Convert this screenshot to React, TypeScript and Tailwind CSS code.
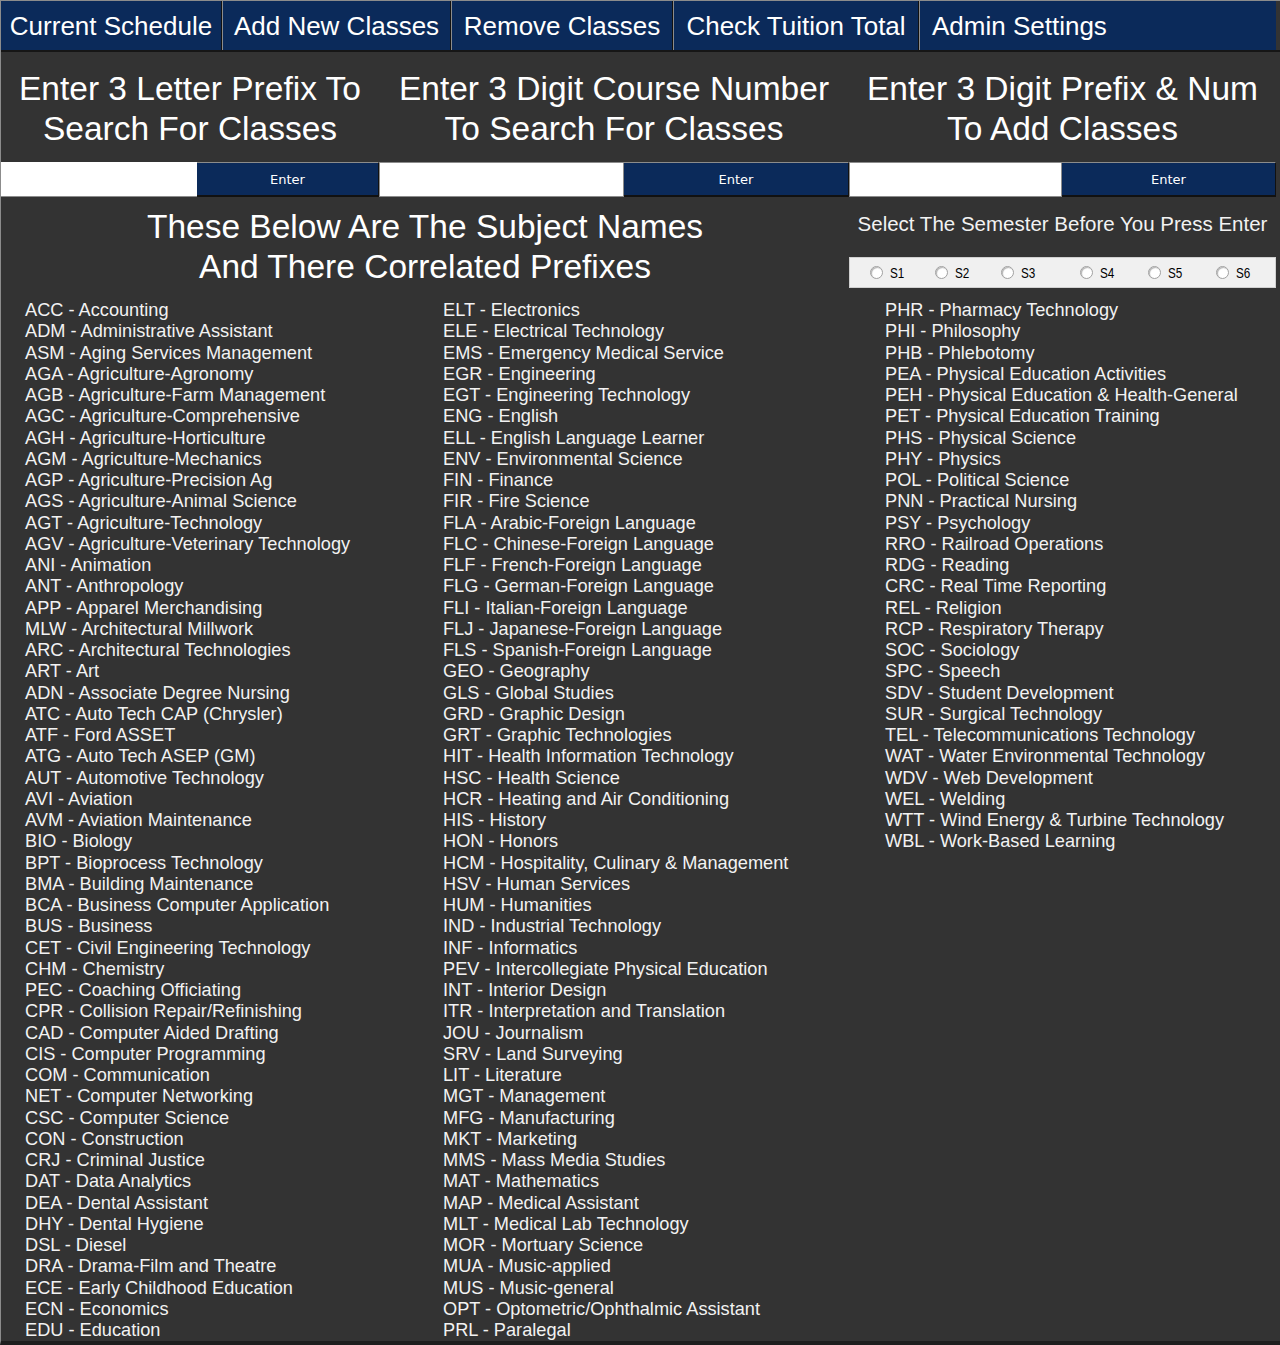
import React from 'react';

const colOne = [
  'ACC - Accounting', 'ADM - Administrative Assistant', 'ASM - Aging Services Management', 'AGA - Agriculture-Agronomy',
  'AGB - Agriculture-Farm Management', 'AGC - Agriculture-Comprehensive', 'AGH - Agriculture-Horticulture', 'AGM - Agriculture-Mechanics',
  'AGP - Agriculture-Precision Ag', 'AGS - Agriculture-Animal Science', 'AGT - Agriculture-Technology', 'AGV - Agriculture-Veterinary Technology',
  'ANI - Animation', 'ANT - Anthropology', 'APP - Apparel Merchandising', 'MLW - Architectural Millwork', 'ARC - Architectural Technologies',
  'ART - Art', 'ADN - Associate Degree Nursing', 'ATC - Auto Tech CAP (Chrysler)', 'ATF - Ford ASSET', 'ATG - Auto Tech ASEP (GM)',
  'AUT - Automotive Technology', 'AVI - Aviation', 'AVM - Aviation Maintenance', 'BIO - Biology', 'BPT - Bioprocess Technology',
  'BMA - Building Maintenance', 'BCA - Business Computer Application', 'BUS - Business', 'CET - Civil Engineering Technology',
  'CHM - Chemistry', 'PEC - Coaching Officiating', 'CPR - Collision Repair/Refinishing', 'CAD - Computer Aided Drafting',
  'CIS - Computer Programming', 'COM - Communication', 'NET - Computer Networking', 'CSC - Computer Science', 'CON - Construction',
  'CRJ - Criminal Justice', 'DAT - Data Analytics', 'DEA - Dental Assistant', 'DHY - Dental Hygiene', 'DSL - Diesel',
  'DRA - Drama-Film and Theatre', 'ECE - Early Childhood Education', 'ECN - Economics', 'EDU - Education',
];

const colTwo = [
  'ELT - Electronics', 'ELE - Electrical Technology', 'EMS - Emergency Medical Service', 'EGR - Engineering', 'EGT - Engineering Technology',
  'ENG - English', 'ELL - English Language Learner', 'ENV - Environmental Science', 'FIN - Finance', 'FIR - Fire Science',
  'FLA - Arabic-Foreign Language', 'FLC - Chinese-Foreign Language', 'FLF - French-Foreign Language', 'FLG - German-Foreign Language',
  'FLI - Italian-Foreign Language', 'FLJ - Japanese-Foreign Language', 'FLS - Spanish-Foreign Language', 'GEO - Geography',
  'GLS - Global Studies', 'GRD - Graphic Design', 'GRT - Graphic Technologies', 'HIT - Health Information Technology',
  'HSC - Health Science', 'HCR - Heating and Air Conditioning', 'HIS - History', 'HON - Honors', 'HCM - Hospitality, Culinary & Management',
  'HSV - Human Services', 'HUM - Humanities', 'IND - Industrial Technology', 'INF - Informatics', 'PEV - Intercollegiate Physical Education',
  'INT - Interior Design', 'ITR - Interpretation and Translation', 'JOU - Journalism', 'SRV - Land Surveying', 'LIT - Literature',
  'MGT - Management', 'MFG - Manufacturing', 'MKT - Marketing', 'MMS - Mass Media Studies', 'MAT - Mathematics', 'MAP - Medical Assistant',
  'MLT - Medical Lab Technology', 'MOR - Mortuary Science', 'MUA - Music-applied', 'MUS - Music-general',
  'OPT - Optometric/Ophthalmic Assistant', 'PRL - Paralegal',
];

const colThree = [
  'PHR - Pharmacy Technology', 'PHI - Philosophy', 'PHB - Phlebotomy', 'PEA - Physical Education Activities',
  'PEH - Physical Education & Health-General', 'PET - Physical Education Training', 'PHS - Physical Science', 'PHY - Physics',
  'POL - Political Science', 'PNN - Practical Nursing', 'PSY - Psychology', 'RRO - Railroad Operations', 'RDG - Reading',
  'CRC - Real Time Reporting', 'REL - Religion', 'RCP - Respiratory Therapy', 'SOC - Sociology', 'SPC - Speech',
  'SDV - Student Development', 'SUR - Surgical Technology', 'TEL - Telecommunications Technology', 'WAT - Water Environmental Technology',
  'WDV - Web Development', 'WEL - Welding', 'WTT - Wind Energy & Turbine Technology', 'WBL - Work-Based Learning',
];

const tabs = [
  { label: 'Current Schedule', w: 'w-[221px]' },
  { label: 'Add New Classes', w: 'w-[229px]' },
  { label: 'Remove Classes', w: 'w-[222px]' },
  { label: 'Check Tuition Total', w: 'w-[246px]' },
];

// each radio slot has its own width so the circles land where the form put them
const semesters = [
  { label: 'S1', w: 'w-[65px]' },
  { label: 'S2', w: 'w-[66px]' },
  { label: 'S3', w: 'w-[79px]' },
  { label: 'S4', w: 'w-[68px]' },
  { label: 'S5', w: 'w-[68px]' },
  { label: 'S6', w: 'w-[50px]' },
];

const SubjectList = ({ items, className }: { items: string[]; className?: string }) => (
  <ul className={`text-[18.2px] leading-[21.25px] text-[#f2f2f2] whitespace-nowrap ${className ?? ''}`}>
    {items.map((s) => (
      <li key={s}>{s}</li>
    ))}
  </ul>
);

const EnterButton = ({ width }: { width: string }) => (
  <button
    className={`${width} h-full bg-[#0b2a5a] text-white text-[13px] font-['DejaVu_Sans'] pt-[2px] border-t border-t-[#8c8c8c] border-r border-r-[#111] border-b-2 border-b-[#111]`}
  >
    Enter
  </button>
);

export default function App() {
  return (
    <div className="w-[1280px] h-[1345px] bg-[#333333] font-['Liberation_Sans',Arial,sans-serif] text-white overflow-hidden border-l border-l-[#8c8c8c] border-b-4 border-b-[#1e1e1e]">
      {/* tab bar */}
      <nav className="flex h-[52px] bg-[#0b2a5a] border-t border-t-[#8c8c8c] border-b-2 border-b-[#161616]">
        {tabs.map((t) => (
          <div
            key={t.label}
            className={`${t.w} flex items-center justify-center text-[26px] leading-none whitespace-nowrap border-l border-l-[#8c8c8c] border-r border-r-[#111] first:border-l-0`}
          >
            {t.label}
          </div>
        ))}
        <div className="flex-1 flex items-center pl-[12px] text-[26px] leading-none border-l border-l-[#8c8c8c] border-r-4 border-r-[#333]">
          Admin Settings
        </div>
      </nav>

      {/* search headings */}
      <div className="grid grid-cols-[378px_470px_1fr] h-[110px] items-center text-center text-[33.5px] leading-[40px] pt-[3px] pr-[4px]">
        <div>Enter 3 Letter Prefix To<br />Search For Classes</div>
        <div>Enter 3 Digit Course Number<br />To Search For Classes</div>
        <div>Enter 3 Digit Prefix &amp; Num<br />To Add Classes</div>
      </div>

      {/* inputs */}
      <div className="flex h-[35px] pr-[4px]">
        <input className="w-[196px] h-full bg-white border-b border-b-[#8c8c8c] outline-none text-black" />
        <EnterButton width="w-[182px]" />
        <input className="w-[245px] h-full bg-white border border-[#8c8c8c] outline-none text-black" />
        <EnterButton width="w-[225px]" />
        <input className="w-[213px] h-full bg-white border border-[#8c8c8c] outline-none text-black" />
        <EnterButton width="flex-1" />
      </div>

      <div className="flex">
        {/* subject names */}
        <div className="w-[848px] pt-[10px]">
          <h2 className="text-center text-[33.5px] leading-[40px]">
            These Below Are The Subject Names<br />And There Correlated Prefixes
          </h2>
          <div className="flex mt-[13px] pl-[24px]">
            <SubjectList items={colOne} className="w-[418px]" />
            <SubjectList items={colTwo} />
          </div>
        </div>

        {/* semester picker */}
        <div className="flex-1 pr-[4px] pt-[15px]">
          <p className="text-center text-[20.5px] leading-[24px] text-[#f2f2f2]">Select The Semester Before You Press Enter</p>
          <div className="mt-[21px] h-[31px] bg-[#f0f0f0] border border-[#d0d0d0] flex items-center pl-[20px]">
            {semesters.map((s) => (
              <label key={s.label} className={`${s.w} flex items-center gap-[7px] text-black`}>
                <span className="w-[13px] h-[13px] rounded-full bg-white border border-[#a0a0a0] shadow-[inset_1px_1px_1px_rgba(0,0,0,0.3)]" />
                <span className="inline-block text-[15px] leading-none origin-left scale-x-[0.78]">{s.label}</span>
              </label>
            ))}
          </div>
          <SubjectList items={colThree} className="mt-[12px] pl-[36px]" />
        </div>
      </div>
    </div>
  );
}
